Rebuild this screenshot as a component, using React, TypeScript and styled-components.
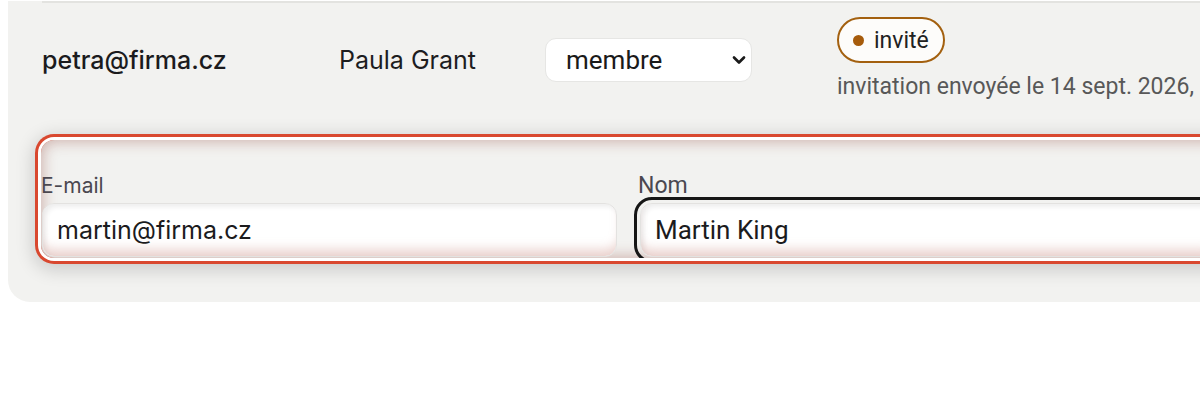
import React from "react";
import styled, { createGlobalStyle } from "styled-components";
import { ChevronDown } from "lucide-react";

const Global = createGlobalStyle`
  html, body { margin: 0; padding: 0; background: #ffffff; overflow: hidden; }
  body { font-family: "Inter", "Noto Sans", sans-serif; color: #1d1d1f; }
`;

const Card = styled.div`
  margin-left: 8px;
  width: 1500px;
  padding: 0 0 44px 33px;
  background: #f2f2f0;
  border-radius: 0 0 0 22px;
`;

const Row = styled.div`
  margin-left: 1px;
  border-top: 2px solid #e3e3e0;
  margin-top: 1px;
  padding: 14px 0 0;
  display: grid;
  grid-template-columns: 297px 206px 292px 1fr;
  align-items: center;
  height: 125px;
  box-sizing: border-box;
  align-content: start;
`;

const Email = styled.div`
  font-family: "Inter", sans-serif;
  font-weight: 500;
  font-size: 25px;
  line-height: 28px;
  color: #1b1b1d;
  padding-top: 2px;
`;

const Name = styled.div`
  font-family: "Inter", sans-serif;
  font-size: 25px;
  line-height: 28px;
  color: #1d1d1f;
  padding-top: 2px;
`;

const SelectWrap = styled.div`
  position: relative;
  width: 207px;
  height: 44px;
  margin-top: 3px;
`;

const RoleSelect = styled.select`
  appearance: none;
  -webkit-appearance: none;
  width: 100%;
  height: 100%;
  padding: 0 40px 0 20px;
  font-family: "Roboto", "Liberation Sans", sans-serif;
  font-size: 26px;
  color: #1a1a1a;
  background: #ffffff;
  border: 1px solid #e6e6e4;
  border-radius: 11px;
`;

const Chevron = styled.span`
  position: absolute;
  right: 3px;
  top: 50%;
  transform: translateY(-50%);
  display: flex;
  color: #1a1a1a;
  pointer-events: none;
`;

const Status = styled.div`
  display: flex;
  flex-direction: column;
  align-items: flex-start;
  white-space: nowrap;
`;

const Badge = styled.span`
  display: inline-flex;
  align-items: center;
  gap: 10px;
  height: 46px;
  box-sizing: border-box;
  padding: 0 14px 0 14px;
  border: 2px solid #a3600f;
  border-radius: 23px;
  background: #fdfcfa;
  font-family: "Roboto", "Liberation Sans", sans-serif;
  font-size: 23px;
  color: #222;
`;

const Dot = styled.span`
  width: 11px;
  height: 11px;
  border-radius: 50%;
  background: #a65b0b;
`;

const Meta = styled.div`
  margin-top: 11px;
  font-family: "Roboto", "Liberation Sans", sans-serif;
  font-size: 23px;
  line-height: 26px;
  color: #585858;
`;

const FormRow = styled.div`
  margin: 14px 0 0 0;
  padding: 33px 0 1px 0;
  display: grid;
  grid-template-columns: 576px 576px;
  column-gap: 23px;
  border-radius: 13px;
  overflow: hidden;
  box-shadow:
    0 0 0 3px #ffffff,
    0 0 0 6px #d9482f,
    0 4px 18px 8px rgba(0, 0, 0, 0.16),
    inset 0 0 14px 2px rgba(150, 75, 65, 0.38);
`;

const Field = styled.label`
  display: flex;
  flex-direction: column;
`;

const Label = styled.span<{ $narrow?: boolean }>`
  font-family: ${(p) => (p.$narrow ? '"Roboto", "Liberation Sans", sans-serif' : '"Inter", sans-serif')};
  font-size: ${(p) => (p.$narrow ? "23px" : "21px")};
  line-height: 25px;
  color: #4b4850;
  margin-bottom: 5px;
  margin-left: ${(p) => (p.$narrow ? "-2px" : "0")};
`;

const Input = styled.input<{ $focused?: boolean; $narrow?: boolean }>`
  height: 54px;
  box-sizing: border-box;
  padding: 0 14px;
  margin-left: ${(p) => (p.$focused ? "0" : "1px")};
  border: 1px solid #e3e2e0;
  border-radius: 12px;
  background: #ffffff;
  font-family: ${(p) => (p.$narrow ? '"Roboto", "Liberation Sans", sans-serif' : '"Inter", sans-serif')};
  font-size: ${(p) => (p.$narrow ? "26px" : "25px")};
  color: #1b1b1d;
  box-shadow:
    inset 0 -12px 12px -6px rgba(200, 135, 125, 0.4),
    inset 3px 3px 5px rgba(0, 0, 0, 0.07);
  outline: ${(p) => (p.$focused ? "3px solid #161616" : "none")};
  outline-offset: 3px;
`;

export default function App() {
  return (
    <>
      <Global />
      <Card>
        <Row>
          <Email>petra@firma.cz</Email>
          <Name>Paula Grant</Name>
          <SelectWrap>
            <RoleSelect defaultValue="membre">
              <option value="admin">admin</option>
              <option value="membre">membre</option>
            </RoleSelect>
            <Chevron>
              <ChevronDown size={20} strokeWidth={3.2} />
            </Chevron>
          </SelectWrap>
          <Status>
            <Badge>
              <Dot />
              invité
            </Badge>
            <Meta>invitation envoyée le 14 sept. 2026,</Meta>
          </Status>
        </Row>
        <FormRow>
          <Field>
            <Label>E-mail</Label>
            <Input defaultValue="martin@firma.cz" />
          </Field>
          <Field>
            <Label $narrow>Nom</Label>
            <Input $focused $narrow defaultValue="Martin King" />
          </Field>
        </FormRow>
      </Card>
    </>
  );
}
